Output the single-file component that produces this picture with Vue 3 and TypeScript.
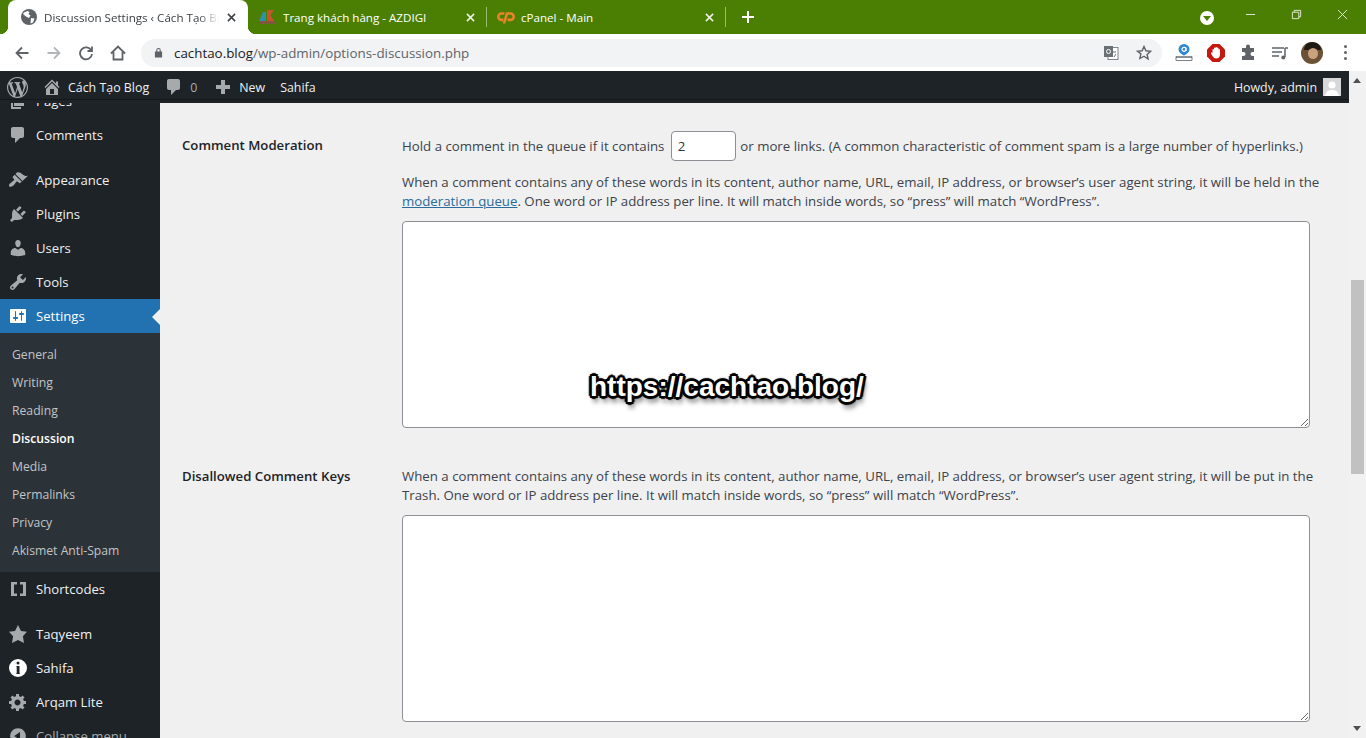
<script setup lang="ts">
interface Item { label: string; d?: string; kind?: string; cls?: string }
const top: Item[] = [
  { label: 'Pages', cls: 'm', d: 'M6 15V2h10v13H6zm-1 1h8v2H3V5h2v11z' },
  { label: 'Comments', cls: 'm sep', d: 'M5 2h9c1.1 0 2 .9 2 2v7c0 1.1-.9 2-2 2h-2l-5 5v-5H5c-1.100 0-2-.9-2-2V4c0-1.100.9-2 2-2z' },
  { label: 'Appearance', cls: 'm', d: 'M14.48 11.06L7.41 3.99l1.5-1.5c.5-.56 2.3-.47 3.51.32 1.21.8 1.43 1.28 2.91 2.1 1.18.64 2.45 1.26 4.67.86l-5.52 5.29zm-.71.71L6.7 4.7 4.93 6.47c-.39.39-.39 1.02 0 1.41l1.06 1.06c.39.39.39 1.03 0 1.42-.6.6-1.43 1.11-2.21 1.69-.35.26-.7.53-1.01.84C1.43 13.23.4 15.6 1.3 16.5c.9.9 3.27-.13 4.63-1.49.31-.31.58-.66.84-1.01.58-.78 1.09-1.61 1.69-2.21.39-.39 1.03-.39 1.42 0l1.06 1.06c.39.39 1.02.39 1.41 0z' },
  { label: 'Plugins', cls: 'm', d: 'M13.11 4.36L9.87 7.6 8 5.73l3.24-3.24c.35-.34 1.05-.2 1.56.32.52.51.66 1.21.31 1.55zm-8 1.77l.91-1.12 9.01 9.01-1.19.84c-.71.71-2.63 1.16-3.82 1.16H6.14L4.9 17.26c-.59.59-1.54.59-2.12 0-.59-.58-.59-1.53 0-2.12l1.24-1.24v-3.88c0-1.13.4-3.19 1.09-3.89zm7.26 3.97l3.24-3.24c.34-.35 1.04-.21 1.55.31.52.51.66 1.21.31 1.55l-3.24 3.25z' },
  { label: 'Users', cls: 'm', d: 'M10 9.25c-2.27 0-2.73-3.44-2.73-3.44C7 4.02 7.82 2 9.97 2c2.16 0 2.98 2.02 2.71 3.81 0 0-.41 3.44-2.68 3.44zm0 2.57L12.72 10c2.39 0 4.52 2.33 4.52 4.53v2.49s-3.65 1.13-7.24 1.13c-3.65 0-7.24-1.13-7.24-1.13v-2.49c0-2.25 1.94-4.48 4.47-4.48z' },
  { label: 'Tools', cls: 'm', d: 'M16.68 9.77c-1.34 1.34-3.3 1.67-4.95.99l-5.41 6.52c-.99.99-2.59.99-3.58 0s-.99-2.59 0-3.57l6.52-5.42c-.68-1.65-.35-3.61.99-4.95 1.28-1.28 3.12-1.62 4.72-1.06l-2.89 2.89 2.82 2.82 2.86-2.87c.53 1.58.18 3.39-1.08 4.65zM3.81 16.21c.4.39 1.04.39 1.43 0 .4-.4.4-1.04 0-1.43-.39-.4-1.03-.4-1.43 0-.39.39-.39 1.03 0 1.43z' },
  { label: 'Settings', cls: 'm active', d: 'M18 16V4c0-.55-.45-1-1-1H3c-.55 0-1 .45-1 1v12c0 .55.45 1 1 1h14c.55 0 1-.45 1-1zM8 11h1c.55 0 1 .45 1 1s-.45 1-1 1H8v1.5c0 .28-.22.5-.5.5s-.5-.22-.5-.5V13H6c-.55 0-1-.45-1-1s.45-1 1-1h1V5.500c0-.28.22-.5.5-.5s.5.22.5.5V11zm5-2h-1c-.55 0-1-.45-1-1s.45-1 1-1h1V5.500c0-.28.22-.5.5-.5s.5.22.5.5V7h1c.55 0 1 .45 1 1s-.45 1-1 1h-1v5.500c0 .28-.22.5-.5.5s-.5-.22-.5-.5V9z' },
]
const sub = ['General', 'Writing', 'Reading', 'Discussion', 'Media', 'Permalinks', 'Privacy', 'Akismet Anti-Spam']
const bottom: Item[] = [
  { label: 'Shortcodes', cls: 'm sep', d: 'M3 3h6v2.500H6v9h3V17H3V3zm9 0h6v14h-6v-2.500h3v-9h-3V3z' },
  { label: 'Taqyeem', cls: 'm', d: 'M10 1l3 6 6 .75-4.12 4.62L16 19l-6-3-6 3 1.13-6.63L1 7.75 7 7z' },
  { label: 'Sahifa', cls: 'm info', d: 'M10 1a9 9 0 1 0 0 18 9 9 0 0 0 0-18zm0 2.600a1.500 1.500 0 1 1 0 3 1.500 1.500 0 0 1 0-3zM8.200 8h3.300v7.200l.9.800H7.800l.9-.8V9.200L8.200 8z' },
  { label: 'Arqam Lite', cls: 'm', d: 'M18 12h-2.180c-.17.7-.44 1.35-.81 1.93l1.540 1.540-2.100 2.100-1.540-1.540c-.58.36-1.230.64-1.910.81V19H8v-2.180c-.68-.17-1.330-.44-1.910-.81l-1.540 1.540-2.120-2.120 1.540-1.540c-.36-.58-.64-1.220-.81-1.890H1V9h2.180c.17-.7.45-1.350.81-1.940L2.460 5.520l2.100-2.100 1.540 1.540c.58-.37 1.240-.64 1.930-.81V2h3v2.180c.68.17 1.330.44 1.910.8l1.540-1.540 2.120 2.120-1.540 1.540c.36.59.64 1.240.81 1.920H18v3zm-8.500 1.500c1.660 0 3-1.340 3-3s-1.340-3-3-3-3 1.340-3 3 1.340 3 3 3z' },
  { label: 'Collapse menu', cls: 'm dim', d: 'M10 2.160c4.330 0 7.840 3.510 7.840 7.840s-3.510 7.840-7.840 7.840S2.160 14.330 2.160 10 5.710 2.160 10 2.160zm2 11.720V6.120L6.180 9.970z' },
]
const wp = 'M20 10c0-5.510-4.490-10-10-10C4.480 0 0 4.490 0 10c0 5.520 4.480 10 10 10 5.510 0 10-4.480 10-10zM7.780 15.370L4.370 6.220c.55-.02 1.170-.08 1.170-.08.5-.06.44-1.130-.06-1.110 0 0-1.450.11-2.370.11-.18 0-.37 0-.58-.01C4.120 2.690 6.870 1.070 10 1.070c2.330 0 4.450.87 6.050 2.340-.68-.11-1.650.39-1.650 1.580 0 .74.45 1.360.9 2.100.35.61.55 1.360.55 2.460 0 1.490-1.400 5-1.400 5l-3.030-8.370c.54-.02.82-.17.82-.17.5-.05.44-1.250-.06-1.220 0 0-1.440.12-2.380.12-.87 0-2.330-.12-2.330-.12-.5-.03-.56 1.200-.06 1.220l.92.08 1.260 3.410zM17.410 10c.24-.64.74-1.870.43-4.250.7 1.290 1.050 2.710 1.050 4.250 0 3.290-1.730 6.240-4.400 7.780.97-2.590 1.940-5.210 2.920-7.780zM6.100 18.090C3.120 16.650 1.110 13.530 1.110 10c0-1.300.23-2.480.72-3.590C3.250 10.300 4.670 14.200 6.100 18.090zm4.030-6.630l2.580 6.980c-.86.29-1.760.45-2.710.45-.79 0-1.570-.11-2.290-.33.81-2.380 1.620-4.740 2.420-7.100z'
const home = 'M16 8.500l1.530 1.530-1.060 1.060L10 4.620l-6.470 6.470-1.060-1.060L10 2.500l4 4v-2h2v4zm-6-2.460l6 5.990V18H4v-5.970zM12 17v-5H8v5h4z'
const bubble = top[1].d as string
</script>

<template>
  <div class="screen">
    <div class="tabstrip">
      <div class="tab current">
        <svg class="fav" viewBox="0 0 16 16"><circle cx="8" cy="8" r="8" fill="#5f6368"/><path d="M3 3.500l3.500-1.500 2 1-1 2 2 1.500-1.500 2.500-3-1.500L2 5zM10 9l3.500.5-1.500 4-2.500 1z" fill="#fff"/></svg>
        <span class="title fade">Discussion Settings ‹ Cách Tạo Bl</span>
        <svg class="x dark" viewBox="0 0 10 10"><path d="M1 1l8 8M9 1l-8 8"/></svg>
      </div>
      <div class="tab other">
        <svg class="fav az" viewBox="0 0 18 16"><path d="M5 3L1 12h7V3z" fill="#2f8fa8"/><path d="M9 1h7l-3.500 5 3.500 6H9z" fill="#c8552a"/><rect x="1" y="12" width="16" height="3" fill="#7d5a3c"/></svg>
        <span class="title">Trang khách hàng - AZDIGI</span>
        <svg class="x" viewBox="0 0 10 10"><path d="M1 1l8 8M9 1l-8 8"/></svg>
      </div>
      <div class="tab other last">
        <svg class="fav wide" viewBox="0 0 18 13"><path d="M7.500 2.500H4.500a3.200 3.200 0 0 0 0 6.400h2" fill="none" stroke="#e8832a" stroke-width="2.600"/><path d="M7 12.500L10 2.500h3.500a3.200 3.200 0 0 1 0 6.400H10.500" fill="none" stroke="#e8832a" stroke-width="2.600"/></svg>
        <span class="title">cPanel - Main</span>
        <svg class="x" viewBox="0 0 10 10"><path d="M1 1l8 8M9 1l-8 8"/></svg>
      </div>
      <svg class="plus" viewBox="0 0 12 12"><path d="M6 0v12M0 6h12"/></svg>
      <div class="spacer"></div>
      <div class="profile-dot"><span></span></div>
      <div class="winbtns">
        <svg viewBox="0 0 12 12"><path d="M1 6h10"/></svg>
        <svg viewBox="0 0 12 12"><path d="M1.500 3.500h7v7h-7zM3.500 3.500v-2h7v7h-2"/></svg>
        <svg viewBox="0 0 12 12"><path d="M1 1l10 10M11 1L1 11"/></svg>
      </div>
    </div>

    <div class="toolbar">
      <svg class="nav" viewBox="0 0 16 16"><path d="M14.500 8H2.500M8 2.500L2.500 8 8 13.500"/></svg>
      <svg class="nav light" viewBox="0 0 16 16"><path d="M1.500 8h12M8 2.500L13.500 8 8 13.500"/></svg>
      <svg class="nav" viewBox="0 0 16 16"><path d="M13.300 5.500A6 6 0 1 0 14 9M14 1.500v4.500H9.500"/></svg>
      <svg class="nav" viewBox="0 0 16 16"><path d="M1 8.500L8 1.500l7 7M3.500 7v7.500h9V7"/></svg>
      <div class="omnibox">
        <svg class="lock" viewBox="0 0 10 12"><path d="M2.500 5V3.500a2.500 2.500 0 0 1 5 0V5H9v6.500H1V5zM3.700 5h2.600V3.500a1.300 1.300 0 0 0-2.600 0z" fill="#5f6368"/></svg>
        <span class="url"><b>cachtao.blog</b>/wp-admin/options-discussion.php</span>
        <svg class="translate" viewBox="0 0 16 16"><rect x="5" y="2.500" width="10" height="12" fill="#fff" stroke="#80868b"/><rect x="1" y="1" width="9" height="11" fill="#6b7074"/><circle cx="5.500" cy="6.500" r="2" fill="none" stroke="#fff"/><path d="M10 7h3M11 12l2-3" stroke="#6b7074" fill="none"/></svg>
        <svg class="star" viewBox="0 0 16 16"><path d="M8 1.500l1.900 4.300 4.600.5-3.400 3.100 1 4.600L8 11.200l-4.100 2.300 1-4.600L1.500 6.300l4.600-.5z"/></svg>
      </div>
      <div class="exts">
        <svg class="e" viewBox="0 0 18 18"><path d="M9 0a5.500 5.500 0 0 1 5.500 5.500C14.500 9 9 11.500 9 11.500S3.500 9 3.500 5.500A5.500 5.500 0 0 1 9 0z" fill="#2e86d6"/><circle cx="9" cy="5.300" r="2" fill="none" stroke="#fff" stroke-width="1.200"/><path d="M11 3.500v3.600" stroke="#fff" stroke-width="1.100"/><path d="M1 12.500v4h16v-4" fill="none" stroke="#77808a"/><path d="M1 13h16" stroke="#3a4650" stroke-width="1.200"/></svg>
        <svg class="e" viewBox="0 0 18 18"><path d="M5.500 0h7L18 5.500v7L12.500 18h-7L0 12.500v-7z" fill="#c5180f"/><path d="M5.500 9V5.500a.8.8 0 0 1 1.500 0V4a.8.8 0 0 1 1.500 0V3.500a.8.8 0 0 1 1.500 0V4a.8.8 0 0 1 1.500 0v1.500a.8.8 0 0 1 1.500 0V10.500c0 2.500-1.500 4-3.800 4S6.500 13.500 5.500 12L4 9.500c-.4-.8.8-1.300 1.500-.5z" fill="#fff"/></svg>
        <svg class="e" viewBox="0 0 18 18"><path d="M7 2.500a2 2 0 0 1 4 0V4h4v4h-1.500a2 2 0 0 0 0 4H15v4H3v-4h1.500a2 2 0 0 0 0-4H3V4h4z" fill="#5f6368"/></svg>
        <svg class="e q" viewBox="0 0 18 18"><path d="M1 4h12M1 8h10M1 12h7" stroke="#5f6368" stroke-width="1.400" fill="none"/><path d="M14 4v9M14 4h3" stroke="#5f6368" stroke-width="1.500" fill="none"/><circle cx="12.300" cy="13.500" r="2" fill="#5f6368"/></svg>
        <div class="avatar"><div class="hair"></div><div class="face"></div></div>
        <div class="dots"><i></i><i></i><i></i></div>
      </div>
    </div>

    <div class="workspace">
      <div class="page">
        <div class="adminbar">
          <svg class="ab wp" viewBox="0 0 20 20"><path :d="wp"/></svg>
          <svg class="ab homeicon" viewBox="0 0 20 20"><path :d="home"/></svg>
          <span class="abt site">Cách Tạo Blog</span>
          <svg class="ab bub" viewBox="0 0 20 20"><path :d="bubble"/></svg>
          <span class="abt zero">0</span>
          <svg class="ab plusi" viewBox="0 0 20 20"><path d="M8 3h4v5h5v4h-5v5H8v-5H3V8h5z"/></svg>
          <span class="abt new">New</span>
          <span class="abt sah">Sahifa</span>
          <span class="abt howdy">Howdy, admin</span>
          <svg class="gravatar" viewBox="0 0 18 18"><rect width="18" height="18" fill="#d8d8d8"/><circle cx="9" cy="7" r="3.600" fill="#fff"/><path d="M2 18c.5-4.500 3.500-6 7-6s6.500 1.500 7 6z" fill="#fff"/></svg>
        </div>
        <div class="below">
          <nav class="side">
            <div class="sidescroll">
              <div v-for="i in top" :key="i.label" :class="i.cls">
                <svg viewBox="0 0 20 20"><path :d="i.d" fill-rule="evenodd"/></svg>
                <span>{{ i.label }}</span>
              </div>
              <div class="submenu">
                <div v-for="s in sub" :key="s" :class="['s', { cur: s === 'Discussion' }]">{{ s }}</div>
              </div>
              <div v-for="i in bottom" :key="i.label" :class="i.cls">
                <svg viewBox="0 0 20 20"><path :d="i.d" fill-rule="evenodd"/></svg>
                <span>{{ i.label }}</span>
              </div>
            </div>
          </nav>
          <main class="main">
            <section class="row first">
              <h3>Comment Moderation</h3>
              <div class="cell">
                <p class="links">Hold a comment in the queue if it contains <input class="num" value="2" readonly /> or more links. (A common characteristic of comment spam is a large number of hyperlinks.)</p>
                <p class="para">When a comment contains any of these words in its content, author name, URL, email, IP address, or browser’s user agent string, it will be held in the <a>moderation queue</a>. One word or IP address per line. It will match inside words, so “press” will match “WordPress”.</p>
                <textarea readonly></textarea>
              </div>
            </section>
            <section class="row second">
              <h3>Disallowed Comment Keys</h3>
              <div class="cell">
                <p class="para">When a comment contains any of these words in its content, author name, URL, email, IP address, or browser’s user agent string, it will be put in the Trash. One word or IP address per line. It will match inside words, so “press” will match “WordPress”.</p>
                <textarea readonly></textarea>
              </div>
            </section>
            <div class="watermark">https://cachtao.blog/</div>
          </main>
        </div>
      </div>
      <div class="scrollbar">
        <span class="up"></span>
        <span class="thumb"></span>
        <span class="down"></span>
      </div>
    </div>
  </div>
</template>

<style>
html, body { margin: 0; padding: 0; overflow: hidden; }
</style>

<style scoped>
.screen { width: 1366px; height: 738px; display: flex; flex-direction: column; overflow: hidden; background: #f0f0f1; font-family: "Open Sans", "Noto Sans", sans-serif; }
.tabstrip { height: 34px; flex: none; background: #4b7f03; display: flex; align-items: center; padding-left: 8px; box-sizing: border-box; color: #fff; }
.tab { height: 34px; display: flex; align-items: center; box-sizing: border-box; position: relative; flex: none; }
.tab.current { width: 240px; background: #fff; border-radius: 8px 8px 0 0; padding: 0 12px 0 13px; color: #3c4043; }
.tab.current::before, .tab.current::after { content: ""; position: absolute; bottom: 0; width: 8px; height: 8px; background: radial-gradient(circle at 0 0, transparent 8px, #fff 8.5px); }
.tab.current::before { left: -8px; }
.tab.current::after { right: -8px; background: radial-gradient(circle at 100% 0, transparent 8px, #fff 8.5px); }
.tab.other { width: 238px; padding: 0 11px 0 10px; }
.tab.other.last { border-left: 1px solid #9dbd6e; border-right: 1px solid #9dbd6e; height: 20px; width: 240px; padding-left: 10px; }
.fav { width: 16px; height: 16px; flex: none; }
.fav.az { width: 18px; margin-right: 0; }
.fav.wide { width: 18px; height: 13px; margin-right: -1px; }
.title { flex: 1; margin-left: 7px; font-size: 11.600px; white-space: nowrap; overflow: hidden; }
.tab.current .title { margin-left: 7px; }
.fade { -webkit-mask-image: linear-gradient(90deg, #000 88%, transparent 100%); mask-image: linear-gradient(90deg, #000 88%, transparent 100%); }
.x { width: 9px; height: 9px; flex: none; fill: none; stroke: #eef3e6; stroke-width: 1.700; margin-left: 8px; }
.x.dark { stroke: #3c4043; }
.plus { width: 12px; height: 12px; margin-left: 16px; fill: none; stroke: #fff; stroke-width: 2; flex: none; }
.spacer { flex: 1; }
.profile-dot { width: 14px; height: 14px; border-radius: 50%; background: #fff; display: flex; align-items: center; justify-content: center; margin-right: 31px; margin-top: 1px; }
.profile-dot span { width: 0; height: 0; border-left: 4px solid transparent; border-right: 4px solid transparent; border-top: 5px solid #4b7f03; margin-top: 2px; }
.winbtns { display: flex; gap: 35px; padding-right: 18px; margin-top: -5px; }
.winbtns svg { width: 11px; height: 11px; fill: none; stroke: #e7efd9; stroke-width: 1; }
.toolbar { height: 37px; flex: none; background: #fff; display: flex; align-items: center; padding-left: 14px; box-sizing: border-box; }
.nav { width: 16px; height: 16px; flex: none; margin-right: 16px; fill: none; stroke: #5f6368; stroke-width: 1.800; }
.nav.light { stroke: #b4b7ba; }
.omnibox { margin-left: -1px; width: 1021px; height: 28px; flex: none; border-radius: 14px; background: #f1f3f4; display: flex; align-items: center; box-sizing: border-box; padding-left: 13px; }
.lock { width: 9px; height: 11px; flex: none; }
.url { margin-left: 11px; font-size: 13.360px; color: #5f6368; flex: 1; white-space: nowrap; }
.url b { font-weight: 400; color: #202124; }
.translate { width: 16px; height: 16px; margin-right: 17px; flex: none; }
.star { width: 16px; height: 16px; fill: none; stroke: #5f6368; stroke-width: 1.400; flex: none; margin-right: 10px; }
.exts { display: flex; align-items: center; margin-left: 13px; }
.e { width: 18px; height: 18px; flex: none; margin-right: 14px; }
.e.q { margin-right: 12px; }
.avatar { width: 22px; height: 22px; border-radius: 50%; background: #6b5236; position: relative; overflow: hidden; }
.hair { position: absolute; left: 3px; top: 0; width: 17px; height: 8px; background: #1f1a14; border-radius: 8px 8px 0 0; }
.face { position: absolute; left: 7px; top: 6px; width: 10px; height: 11px; background: #caa27c; border-radius: 50%; }
.dots { display: flex; flex-direction: column; gap: 3px; margin-left: 21px; }
.dots i { width: 3px; height: 3px; border-radius: 50%; background: #5f6368; }

.workspace { flex: 1; min-height: 0; display: flex; }
.page { flex: 1; min-width: 0; display: flex; flex-direction: column; }
.adminbar { height: 32px; flex: none; background: linear-gradient(#1d2327 28px, #14181b 28px, #14181b 29px, #1d2327 29px); color: #f0f0f1; display: flex; align-items: center; font-size: 12.400px; box-sizing: border-box; }
.ab { fill: #a7aaad; flex: none; }
.wp { width: 21px; height: 21px; margin-left: 7px; }
.homeicon { width: 20px; height: 20px; margin-left: 14px; }
.abt { white-space: nowrap; }
.site { margin-left: 6px; }
.bub { width: 20px; height: 20px; margin-left: 15px; }
.zero { color: #a7aaad; margin-left: 6px; }
.plusi { width: 20px; height: 20px; margin-left: 16px; }
.new { margin-left: 6px; }
.sah { margin-left: 15px; }
.howdy { margin-left: auto; }
.gravatar { width: 18px; height: 18px; margin: 0 8px 0 6px; flex: none; }
.below { flex: 1; min-height: 0; display: flex; }
.side { width: 160px; flex: none; background: #1d2327; overflow: hidden; }
.sidescroll { margin-top: -19px; }
.m { height: 34px; display: flex; align-items: center; color: #f0f0f1; font-size: 13.150px; position: relative; padding-left: 8px; }
.m svg { width: 20px; height: 20px; fill: #a7aaad; flex: none; margin-right: 8px; }
.m.sep { margin-bottom: 11px; }
.m.active { background: #2271b1; color: #fff; }
.m.active svg { fill: #fff; }
.m.active::after { content: ""; position: absolute; right: 0; top: 10px; border: 8px solid transparent; border-right-color: #f0f0f1; border-left-width: 0; }
.m.info svg { fill: #fff; }
.m.dim { color: #a7aaad; }
.m.dim svg { fill: #a7aaad; }
.submenu { background: #2c3338; padding: 8px 0 7px; }
.s { height: 28px; line-height: 28px; padding-left: 12px; font-size: 12.200px; color: #c3c4c7; white-space: nowrap; }
.s.cur { color: #fff; font-weight: 600; }
.main { flex: 1; min-width: 0; position: relative; padding: 28px 0 0 22px; box-sizing: border-box; overflow: hidden; color: #3c434a; font-size: 13.250px; line-height: 19px; }
.row { display: grid; grid-template-columns: 220px 908px; }
.second { margin-top: 39px; }
h3 { margin: 0; font-size: 13.200px; font-weight: 600; line-height: 19px; color: #1d2327; padding-top: 5px; }
.second h3 { padding-top: 0; }
.cell { min-width: 0; }
p { margin: 0; }
.para { margin-right: -12px; }
.links { white-space: nowrap; height: 30px; line-height: 30px; margin-bottom: 12px; }
.num { width: 65px; height: 30px; box-sizing: border-box; border: 1px solid #8c8f94; border-radius: 4px; padding: 0 6px; font: inherit; color: #2c3338; background: #fff; outline: none; vertical-align: top; margin: 0 1px 0 3px; }
textarea { display: block; width: 908px; height: 207px; margin-top: 10px; box-sizing: border-box; border: 1px solid #8c8f94; border-radius: 4px; background: #fff; outline: none; padding: 2px 6px; }
a { color: #2b6c9c; text-decoration: underline; }
.watermark { position: absolute; left: 430px; top: 266px; font-family: "Liberation Sans", Arial, sans-serif; font-weight: 700; font-size: 28px; line-height: 36px; color: #fff; white-space: nowrap; text-shadow: 2px 0 0 #000, -2px 0 0 #000, 0 2px 0 #000, 0 -2px 0 #000, 2px 2px 0 #000, -2px 2px 0 #000, 2px -2px 0 #000, -2px -2px 0 #000, 3px 0 1px #000, -3px 0 1px #000, 0 3px 1px #000, 0 -3px 1px #000, 2px 6px 5px rgba(0,0,0,.6); }
.scrollbar { width: 17px; flex: none; background: #f1f1f1; position: relative; }
.up { position: absolute; left: 4px; top: 7px; border-left: 4.500px solid transparent; border-right: 4.500px solid transparent; border-bottom: 5px solid #505050; }
.down { position: absolute; left: 4px; bottom: 7px; border-left: 4.500px solid transparent; border-right: 4.500px solid transparent; border-top: 5px solid #505050; }
.thumb { position: absolute; left: 2px; top: 209px; width: 13px; height: 194px; background: #c1c1c1; }
</style>
